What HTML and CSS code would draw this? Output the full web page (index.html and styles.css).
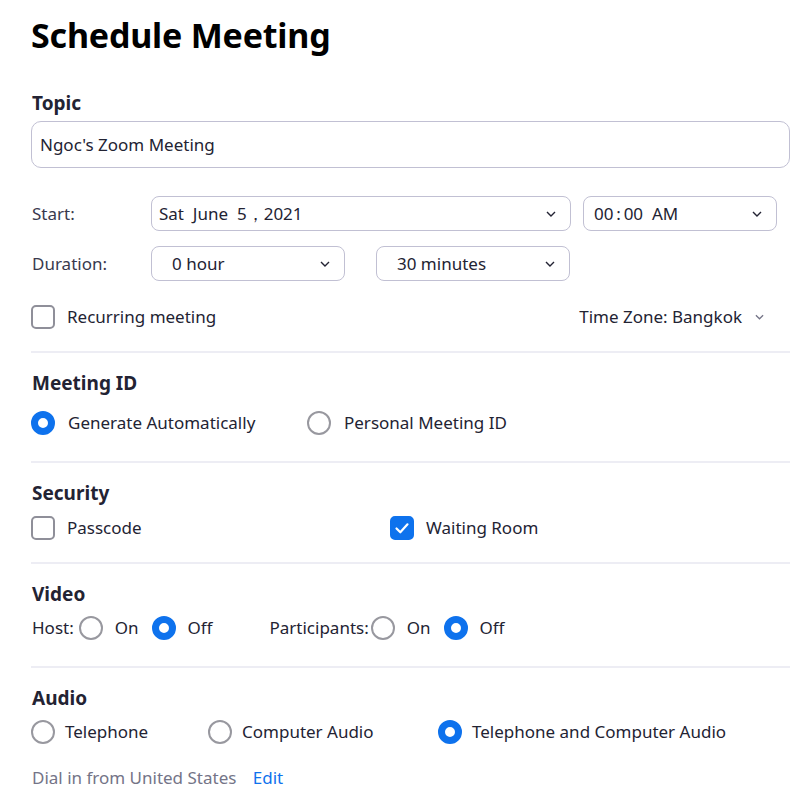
FILE: index.html
```html
<!DOCTYPE html>
<html lang="en">
<head>
<meta charset="utf-8">
<title>Schedule Meeting</title>
<link rel="stylesheet" href="styles.css">
</head>
<body>
<div class="page">
  <h1 class="title">Schedule Meeting</h1>

  <section class="block top">
    <div class="heading">Topic</div>
    <div class="text-input">Ngoc's Zoom Meeting</div>

    <div class="field-row start-row">
      <span class="field-label">Start:</span>
      <div class="select date-select"><span class="val">Sat&nbsp; June&nbsp; 5，2021</span><svg class="chev" viewBox="0 0 10 6"><path d="M1 1l4 4 4-4"/></svg></div>
      <div class="select time-select"><span class="val">00&thinsp;:&thinsp;00&nbsp; AM</span><svg class="chev" viewBox="0 0 10 6"><path d="M1 1l4 4 4-4"/></svg></div>
    </div>
    <div class="field-row dur-row">
      <span class="field-label">Duration:</span>
      <div class="select dur-select"><span class="val">0 hour</span><svg class="chev" viewBox="0 0 10 6"><path d="M1 1l4 4 4-4"/></svg></div>
      <div class="select dur-select"><span class="val">30 minutes</span><svg class="chev" viewBox="0 0 10 6"><path d="M1 1l4 4 4-4"/></svg></div>
    </div>
    <div class="option-row recur-row">
      <label class="opt"><span class="checkbox"></span><span>Recurring meeting</span></label>
      <span class="tz">Time Zone: Bangkok <svg class="chev tz-chev" viewBox="0 0 10 6"><path d="M1 1l4 4 4-4"/></svg></span>
    </div>
  </section>

  <section class="block wide">
    <div class="heading">Meeting ID</div>
    <div class="option-row id-row">
      <label class="opt opt-mid"><span class="radio on"></span><span>Generate Automatically</span></label>
      <label class="opt opt-mid"><span class="radio"></span><span>Personal Meeting ID</span></label>
    </div>
  </section>

  <section class="block">
    <div class="heading">Security</div>
    <div class="option-row">
      <label class="opt opt-sec"><span class="checkbox"></span><span>Passcode</span></label>
      <label class="opt"><span class="checkbox checked"><svg viewBox="0 0 24 24"><path d="M6.5 12.5l3.8 3.8 7.2-8"/></svg></span><span>Waiting Room</span></label>
    </div>
  </section>

  <section class="block wide">
    <div class="heading">Video</div>
    <div class="video-row">
      <span class="vlabel">Host:</span>
      <label class="vopt"><span class="radio"></span><span>On</span></label>
      <label class="vopt"><span class="radio on"></span><span>Off</span></label>
      <span class="vlabel part">Participants:</span>
      <label class="vopt"><span class="radio"></span><span>On</span></label>
      <label class="vopt"><span class="radio on"></span><span>Off</span></label>
    </div>
  </section>

  <section class="block last">
    <div class="heading">Audio</div>
    <div class="option-row audio-row">
      <label class="opt a1"><span class="radio"></span><span>Telephone</span></label>
      <label class="opt a2"><span class="radio"></span><span>Computer Audio</span></label>
      <label class="opt"><span class="radio on"></span><span>Telephone and Computer Audio</span></label>
    </div>
    <div class="dial">Dial in from United States <a class="edit" href="#">Edit</a></div>
  </section>
</div>
</body>
</html>
```

FILE: styles.css
```css
* { box-sizing: border-box; }
html, body { margin: 0; padding: 0; background: #fff; }
body {
  font-family: "Noto Sans", "Open Sans", sans-serif;
  font-size: 17px;
  line-height: 24px;
  color: #232333;
}
.page { padding: 0 17px 0 31px; width: 807px; }
.title {
  margin: 0;
  padding-top: 13px;
  font-size: 34px;
  line-height: 44px;
  font-weight: 700;
  color: #000;
  letter-spacing: -0.2px;
}
.block {
  border-bottom: 2px solid #ededf4;
  padding: 18px 0 18px 0;
}
.block.wide { padding-bottom: 22px; }
.block.top { padding-top: 34px; padding-bottom: 18px; }
.block.last { border-bottom: none; }
.heading {
  font-weight: 700;
  font-size: 19px;
  line-height: 24px;
  color: #232333;
  padding-left: 1px;
}
.text-input {
  margin-top: 6px;
  height: 47px;
  border: 1.5px solid #c1c0d3;
  border-radius: 10px;
  padding: 0 8px;
  display: flex;
  align-items: center;
}
.field-row { display: flex; align-items: center; padding-left: 1px; }
.start-row { margin-top: 28px; }
.dur-row { margin-top: 15px; }
.field-label { width: 119px; color: #39394d; }
.select {
  height: 35px;
  border: 1.5px solid #c1c0d3;
  border-radius: 8px;
  display: flex;
  align-items: center;
  justify-content: space-between;
  padding: 0 14px 0 7px;
}
.date-select { width: 420px; }
.time-select { width: 194px; margin-left: 12px; padding-left: 10px; }
.dur-select { width: 194px; padding-left: 20px; }
.dur-select + .dur-select { margin-left: 31px; }
.chev { width: 10px; height: 6px; fill: none; stroke: #232333; stroke-width: 1.4; }
.tz-chev { stroke: #747487; width: 9px; margin-left: 13px; }
.option-row { display: flex; align-items: center; height: 32px; margin-top: 7px; }
.id-row { margin-top: 12px; }
.block.top .recur-row { margin-top: 20px; justify-content: space-between; padding-right: 26px; }
.opt { display: flex; align-items: center; gap: 12px; }
.opt-mid { width: 276px; gap: 13px; }
.opt-sec { width: 359px; }
.audio-row { margin-top: 6px; }
.audio-row .opt { gap: 10px; }
.a1 { width: 177px; }
.a2 { width: 230px; }
.checkbox {
  width: 24px; height: 24px;
  border: 2px solid #8f8f99;
  border-radius: 5px;
  display: inline-flex;
  flex: none;
}
.checkbox.checked { background: #0e72ed; border-color: #0e72ed; }
.checkbox svg { fill: none; stroke: #fff; stroke-width: 2.2; stroke-linecap: round; stroke-linejoin: round; margin: -2px; width: 24px; height: 24px; }
.radio {
  width: 24px; height: 24px;
  border: 2px solid #98989f;
  border-radius: 50%;
  flex: none;
  display: inline-block;
}
.radio.on { border: 7px solid #0e72ed; }
.tz { display: flex; align-items: center; color: #232333; }
.video-row { display: flex; align-items: center; height: 32px; margin-top: 6px; padding-left: 1px; }
.vlabel { margin-right: 5px; }
.vlabel.part { margin-left: 44px; margin-right: 2px; }
.vopt { display: flex; align-items: center; gap: 12px; margin-right: 13px; }
.dial { margin-top: 18px; color: #747487; padding-left: 1px; }
.edit { color: #0e72ed; text-decoration: none; margin-left: 12px; }
```
